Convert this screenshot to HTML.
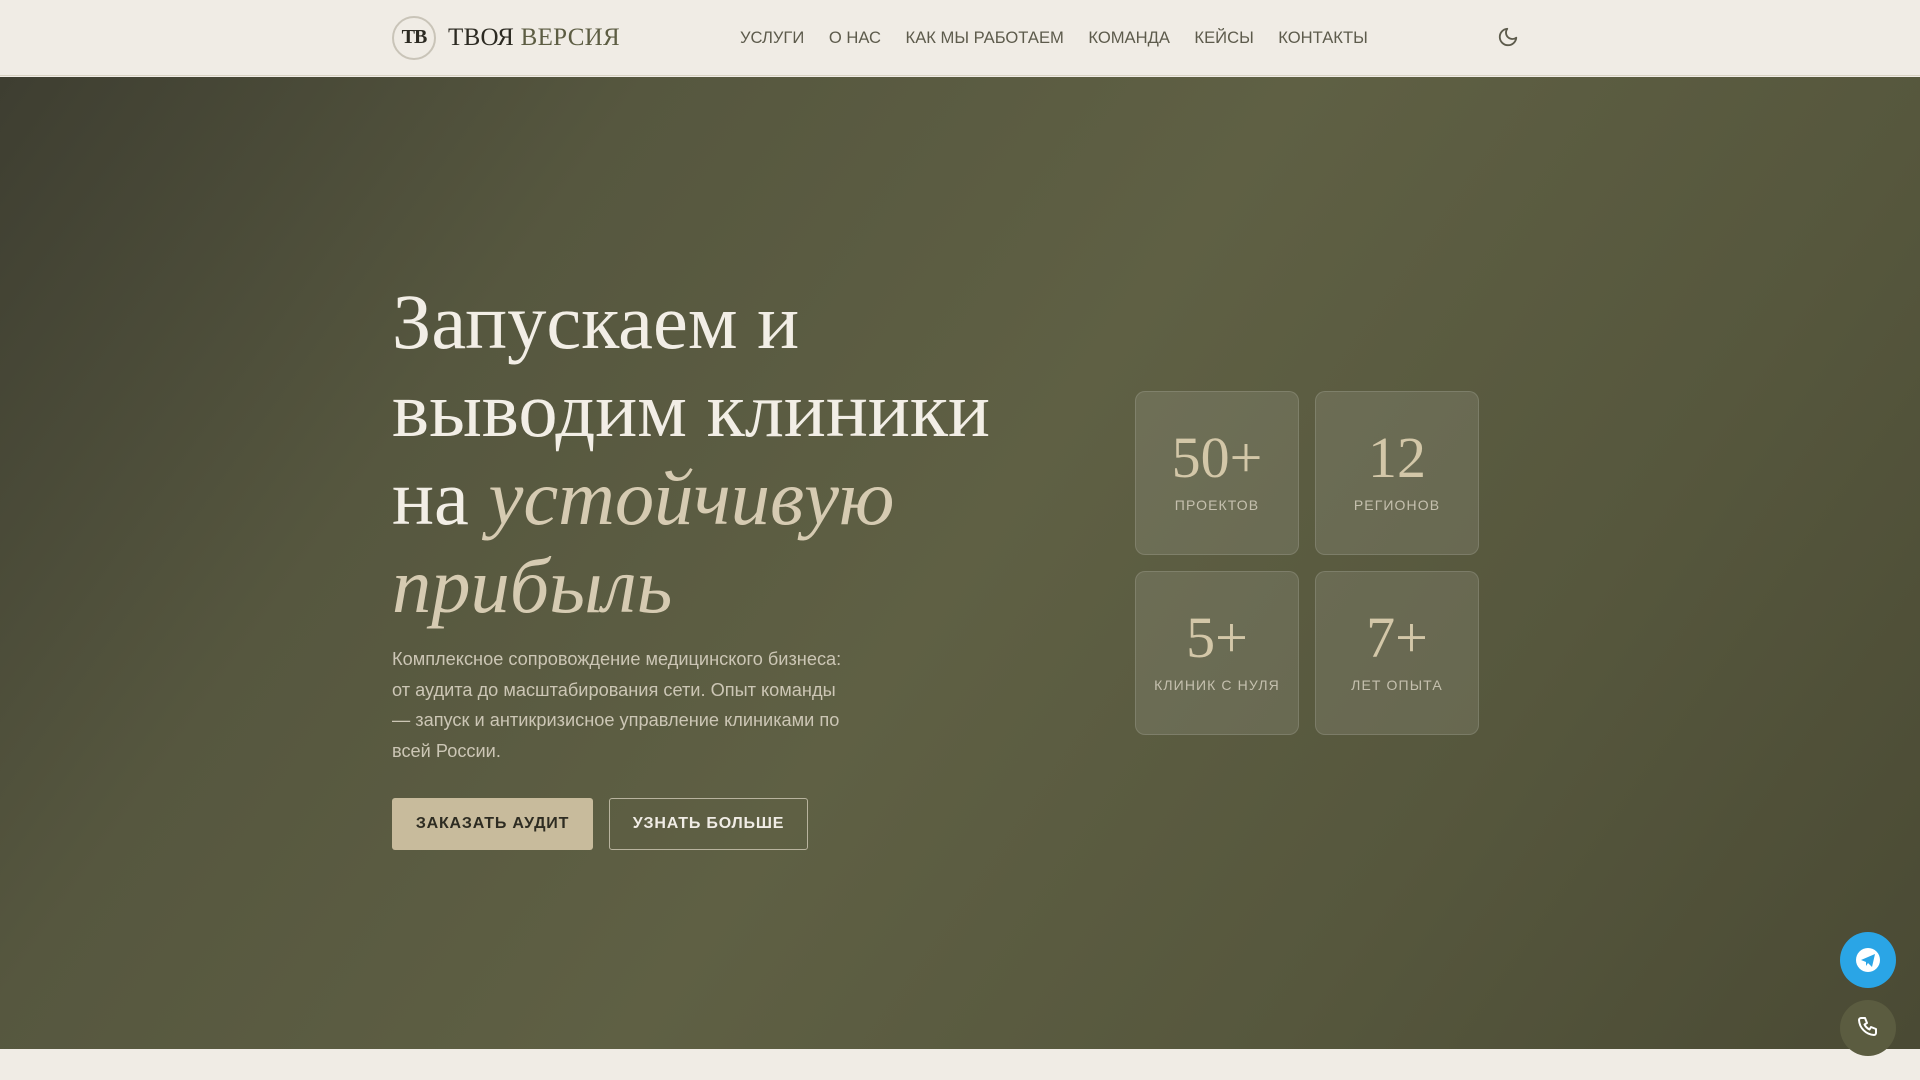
<!DOCTYPE html>
<html lang="ru"><head><meta charset="utf-8"><style>
*{margin:0;padding:0;box-sizing:border-box}
body{width:1920px;height:1080px;overflow:hidden;background:#f0ece5;font-family:"Liberation Sans",sans-serif;position:relative}
header{position:absolute;left:0;top:0;width:1920px;height:76px;background:#f0ece5;border-bottom:1px solid #d8d2c2}
.logo{position:absolute;left:392px;top:16px;width:44px;height:44px;border:2px solid #c9c4b8;border-radius:50%;font-family:"Liberation Serif",serif;font-weight:bold;font-size:20px;color:#2c2a22;text-align:center;line-height:38px;letter-spacing:-1px}
.brand{position:absolute;left:448px;top:24px;font-family:"Liberation Serif",serif;font-size:25px;color:#2c2a22;letter-spacing:0.3px}
.brand span{color:#5d5d43}
nav{position:absolute;left:740px;top:28px;font-size:16.6px;color:#5d5b4c;display:flex;gap:24.5px}
.moon{position:absolute;left:1497px;top:26px}
.hero{position:absolute;left:0;top:77px;width:1920px;height:972px;background:linear-gradient(125deg,#3e3e31 0%,#56573f 25%,#5f6044 50%,#56573d 75%,#4a4a34 100%)}
h1{position:absolute;left:392px;top:278px;width:640px;font-family:"Liberation Serif",serif;font-weight:normal;font-size:78.5px;line-height:88px;color:#f2eee6}
h1 em{color:#d6cbb2}
.p{position:absolute;left:392px;top:644px;width:462px;font-size:18.2px;line-height:30.6px;color:#ccc6b5}
.b1{position:absolute;left:392px;top:798px;width:201px;height:52px;background:#c8bb9c;border-radius:3px;color:#2e2c22;font-weight:bold;font-size:16px;letter-spacing:0.8px;text-align:center;line-height:52px}
.b2{position:absolute;left:609px;top:798px;width:199px;height:52px;border:1px solid #b8b39e;border-radius:3px;color:#f0ece5;font-weight:bold;font-size:16px;letter-spacing:0.8px;text-align:center;line-height:50px}
.card{position:absolute;width:164px;height:164px;background:rgba(255,255,255,0.1);border:1px solid rgba(255,255,255,0.13);border-radius:10px;text-align:center}
.card .n{font-family:"Liberation Serif",serif;font-size:58px;color:#d3c7a8;margin-top:36px;line-height:60px}
.card .l{font-size:14px;letter-spacing:1.1px;color:#c5c0ae;margin-top:9px}
.tg{position:absolute;left:1840px;top:932px;width:56px;height:56px;border-radius:50%;background:#2aa5e6}
.ph{position:absolute;left:1840px;top:1000px;width:56px;height:56px;border-radius:50%;background:#5b5c40}
</style></head><body>
<header>
<div class="logo">ТВ</div>
<div class="brand">ТВОЯ <span>ВЕРСИЯ</span></div>
<nav><span>УСЛУГИ</span><span>О НАС</span><span>КАК МЫ РАБОТАЕМ</span><span>КОМАНДА</span><span>КЕЙСЫ</span><span>КОНТАКТЫ</span></nav>
<svg class="moon" width="22" height="22" viewBox="0 0 24 24" fill="none" stroke="#5d5b4c" stroke-width="2" stroke-linecap="round" stroke-linejoin="round"><path d="M21 12.8A9 9 0 1 1 11.2 3a7 7 0 0 0 9.8 9.8z"/></svg>
</header>
<div class="hero"></div>
<h1>Запускаем и выводим клиники на <em>устойчивую прибыль</em></h1>
<div class="p">Комплексное сопровождение медицинского бизнеса: от аудита до масштабирования сети. Опыт команды — запуск и антикризисное управление клиниками по всей России.</div>
<div class="b1">ЗАКАЗАТЬ АУДИТ</div>
<div class="b2">УЗНАТЬ БОЛЬШЕ</div>
<div class="card" style="left:1135px;top:391px"><div class="n">50+</div><div class="l">ПРОЕКТОВ</div></div>
<div class="card" style="left:1315px;top:391px"><div class="n">12</div><div class="l">РЕГИОНОВ</div></div>
<div class="card" style="left:1135px;top:571px"><div class="n">5+</div><div class="l">КЛИНИК С НУЛЯ</div></div>
<div class="card" style="left:1315px;top:571px"><div class="n">7+</div><div class="l">ЛЕТ ОПЫТА</div></div>
<div class="tg"><svg width="56" height="56" viewBox="0 0 56 56"><circle cx="28" cy="28" r="12" fill="#fff"/><path d="M21 28 L35 22 L32 35 L28 31 L26 34 L26 30 Z" fill="#2aa5e6"/></svg></div>
<div class="ph"><svg width="56" height="56" viewBox="0 0 56 56" fill="none" stroke="#fff" stroke-width="2" stroke-linejoin="round"><path d="M21 18 l4 0 l2 5 l-2.5 1.5 a11 11 0 0 0 5 5 l1.5 -2.5 l5 2 l0 4 a2 2 0 0 1 -2 2 a16 16 0 0 1 -15 -15 a2 2 0 0 1 2 -2z"/></svg></div>
</body></html>
